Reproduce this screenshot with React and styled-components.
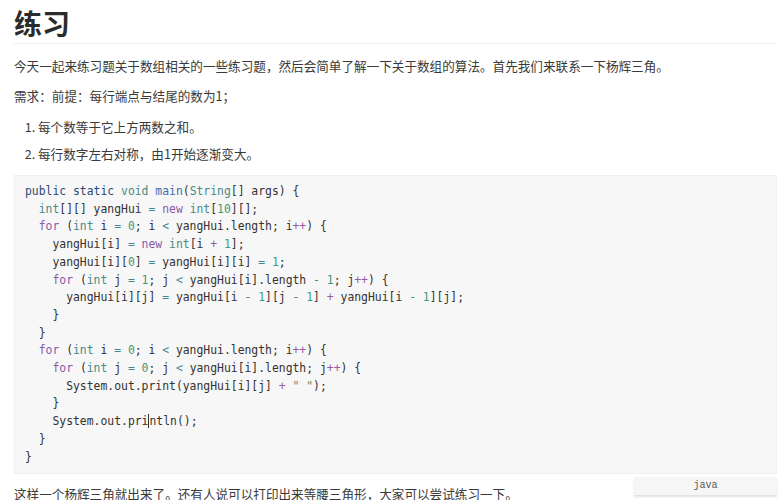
import React from "react";
import styled, { createGlobalStyle } from "styled-components";

const GlobalStyle = createGlobalStyle`
  body {
    margin: 0;
    background: #fff;
    font-family: "Noto Sans CJK SC", "Noto Sans", sans-serif;
    overflow: hidden;
  }
`;

const Page = styled.div`
  padding: 0 7px 0 14px;
  color: #3a3a3a;
`;

const Title = styled.h1`
  margin: 0;
  padding: 6px 0 3px;
  font-size: 28px;
  line-height: 34px;
  font-weight: 700;
  color: #2b2b2b;
  border-bottom: 1px solid #eeeeee;
`;

const Para = styled.p`
  margin: ${(p) => p.$top || 10}px 0 0;
  font-size: 12.6px;
  line-height: 20px;
  white-space: nowrap;
`;

const List = styled.ol`
  margin: 11px 0 0;
  padding-left: 24px;
  font-size: 12.6px;
  line-height: 20px;
`;

const Item = styled.li`
  margin-bottom: ${(p) => (p.$last ? 0 : 7)}px;
`;

const CodeWrap = styled.div`
  position: relative;
  margin-top: 11px;
`;

const Code = styled.pre`
  margin: 0;
  padding: 7px 10px;
  background: #f7f7f7;
  border: 1px solid #f0f0f0;
  font-family: "DejaVu Sans Mono", "Liberation Mono", monospace;
  font-size: 11.4px;
  line-height: 17.7px;
  color: #333;
`;

const LangTag = styled.div`
  position: absolute;
  top: calc(100% + 3px);
  right: 0;
  width: 143px;
  height: 18px;
  background: #f6f6f6;
  box-shadow: 0 2px 2px rgba(0, 0, 0, 0.12);
  font-family: "Liberation Mono", monospace;
  font-size: 10px;
  line-height: 18px;
  text-align: center;
  color: #555;
`;

const Caret = styled.span`
  display: inline-block;
  width: 0;
  height: 14px;
  border-left: 1px solid #333;
  vertical-align: -3px;
`;

const colors = {
  mod: "#2c4a72",
  type: "#4a8a86",
  kw: "#8959a8",
  fn: "#3c6fb0",
  num: "#3e9a78",
  op: "#3e8a8f",
  plus: "#9a5aa0",
  str: "#6a8a6a",
  id: "#333333",
};

const Tok = styled.span`
  color: ${(p) => colors[p.$k] || colors.id};
`;

const lines = [
  "public static void main(String[] args) {",
  "  int[][] yangHui = new int[10][];",
  "  for (int i = 0; i < yangHui.length; i++) {",
  "    yangHui[i] = new int[i + 1];",
  "    yangHui[i][0] = yangHui[i][i] = 1;",
  "    for (int j = 1; j < yangHui[i].length - 1; j++) {",
  "      yangHui[i][j] = yangHui[i - 1][j - 1] + yangHui[i - 1][j];",
  "    }",
  "  }",
  "  for (int i = 0; i < yangHui.length; i++) {",
  "    for (int j = 0; j < yangHui[i].length; j++) {",
  '      System.out.print(yangHui[i][j] + " ");',
  "    }",
  "    System.out.println();",
  "  }",
  "}",
];

const kinds = {
  public: "mod",
  static: "mod",
  void: "type",
  String: "type",
  int: "type",
  new: "kw",
  for: "kw",
  main: "fn",
};

function tokenize(line) {
  const re = /("[^"]*")|(\d+)|([A-Za-z_]\w*)|(\+\+|\+|=|<|-)|(\s+)|(.)/g;
  const out = [];
  let m;
  while ((m = re.exec(line))) {
    const t = m[0];
    let k = "id";
    if (m[1]) k = "str";
    else if (m[2]) k = "num";
    else if (m[3]) k = kinds[t] || "id";
    else if (m[4]) k = t.startsWith("+") ? "plus" : "op";
    out.push({ t, k });
  }
  return out;
}

function CodeLine({ text, index }) {
  const toks = tokenize(text);
  return (
    <>
      {toks.map((tk, i) => {
        if (index === 13 && tk.t === "println") {
          return (
            <Tok key={i} $k={tk.k}>
              pri<Caret />ntln
            </Tok>
          );
        }
        return (
          <Tok key={i} $k={tk.k}>
            {tk.t}
          </Tok>
        );
      })}
      {"\n"}
    </>
  );
}

export default function App() {
  return (
    <Page>
      <GlobalStyle />
      <Title>练习</Title>
      <Para $top={12}>
        今天一起来练习题关于数组相关的一些练习题，然后会简单了解一下关于数组的算法。首先我们来联系一下杨辉三角。
      </Para>
      <Para>需求：前提：每行端点与结尾的数为1；</Para>
      <List>
        <Item>每个数等于它上方两数之和。</Item>
        <Item $last>每行数字左右对称，由1开始逐渐变大。</Item>
      </List>
      <CodeWrap>
        <Code>
          {lines.map((l, i) => (
            <CodeLine key={i} text={l} index={i} />
          ))}
        </Code>
        <LangTag>java</LangTag>
      </CodeWrap>
      <Para>
        这样一个杨辉三角就出来了。还有人说可以打印出来等腰三角形，大家可以尝试练习一下。
      </Para>
    </Page>
  );
}
